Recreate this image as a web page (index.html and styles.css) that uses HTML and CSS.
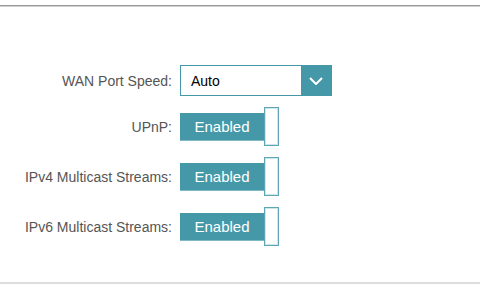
FILE: index.html
```html
<!DOCTYPE html>
<html lang="en">
<head>
    <meta charset="UTF-8">
    <meta name="viewport" content="width=device-width, initial-scale=1.0">
    <title>Advanced Settings</title>
    <link rel="stylesheet" href="styles.css">
</head>
<body>
    <div class="top-line"></div>

    <div class="settings">
        <div class="row row-select">
            <label class="label">WAN Port Speed:</label>
            <div class="select">
                <span class="select-value">Auto</span>
                <span class="select-arrow">
                    <svg width="14" height="8" viewBox="0 0 14 8"><path d="M1 1 L7 7 L13 1" fill="none" stroke="#fff" stroke-width="2"/></svg>
                </span>
            </div>
        </div>

        <div class="row">
            <label class="label">UPnP:</label>
            <div class="toggle">
                <span class="toggle-bar">Enabled</span>
                <span class="toggle-knob"></span>
            </div>
        </div>

        <div class="row">
            <label class="label">IPv4 Multicast Streams:</label>
            <div class="toggle">
                <span class="toggle-bar">Enabled</span>
                <span class="toggle-knob"></span>
            </div>
        </div>

        <div class="row">
            <label class="label">IPv6 Multicast Streams:</label>
            <div class="toggle">
                <span class="toggle-bar">Enabled</span>
                <span class="toggle-knob"></span>
            </div>
        </div>
    </div>

    <div class="bottom-line"></div>
</body>
</html>
```

FILE: styles.css
```css
body {
    font-family: "Liberation Sans", Arial, sans-serif;
    background-color: #ffffff;
    margin: 0;
    padding: 0;
}

.top-line {
    margin-top: 5px;
    height: 1px;
    background-color: #9a9a9a;
    border-bottom: 1px solid #d0d0d0;
}

.settings {
    display: flex;
    flex-direction: column;
    gap: 11px;
    padding-top: 58px;
}

.row {
    display: flex;
    align-items: center;
    height: 39px;
}

.row-select {
    height: 31px;
}

.label {
    width: 172px;
    margin-right: 8px;
    text-align: right;
    font-size: 14px;
    color: #555;
}

.select {
    display: flex;
    width: 152px;
    height: 31px;
    box-sizing: border-box;
    border: 1px solid #4598a8;
}

.select-value {
    flex: 1;
    display: flex;
    align-items: center;
    padding-left: 10px;
    font-size: 14px;
    color: #000;
}

.select-arrow {
    width: 30px;
    display: flex;
    align-items: center;
    justify-content: center;
    background-color: #4598a8;
}

.toggle {
    display: flex;
    align-items: center;
    height: 39px;
}

.toggle-bar {
    width: 84px;
    height: 28px;
    display: flex;
    align-items: center;
    justify-content: center;
    background-color: #4598a8;
    color: #fff;
    font-size: 15px;
    box-shadow: inset 0 -1px 0 #7fb9c5;
}

.toggle-knob {
    width: 15px;
    height: 39px;
    box-sizing: border-box;
    background-color: #fff;
    border: 1px solid #5ea6b4;
    box-shadow: inset 0 0 0 1px #cfe5ea;
}

.bottom-line {
    margin-top: 36px;
    height: 2px;
    background-color: #dddddd;
}
```
